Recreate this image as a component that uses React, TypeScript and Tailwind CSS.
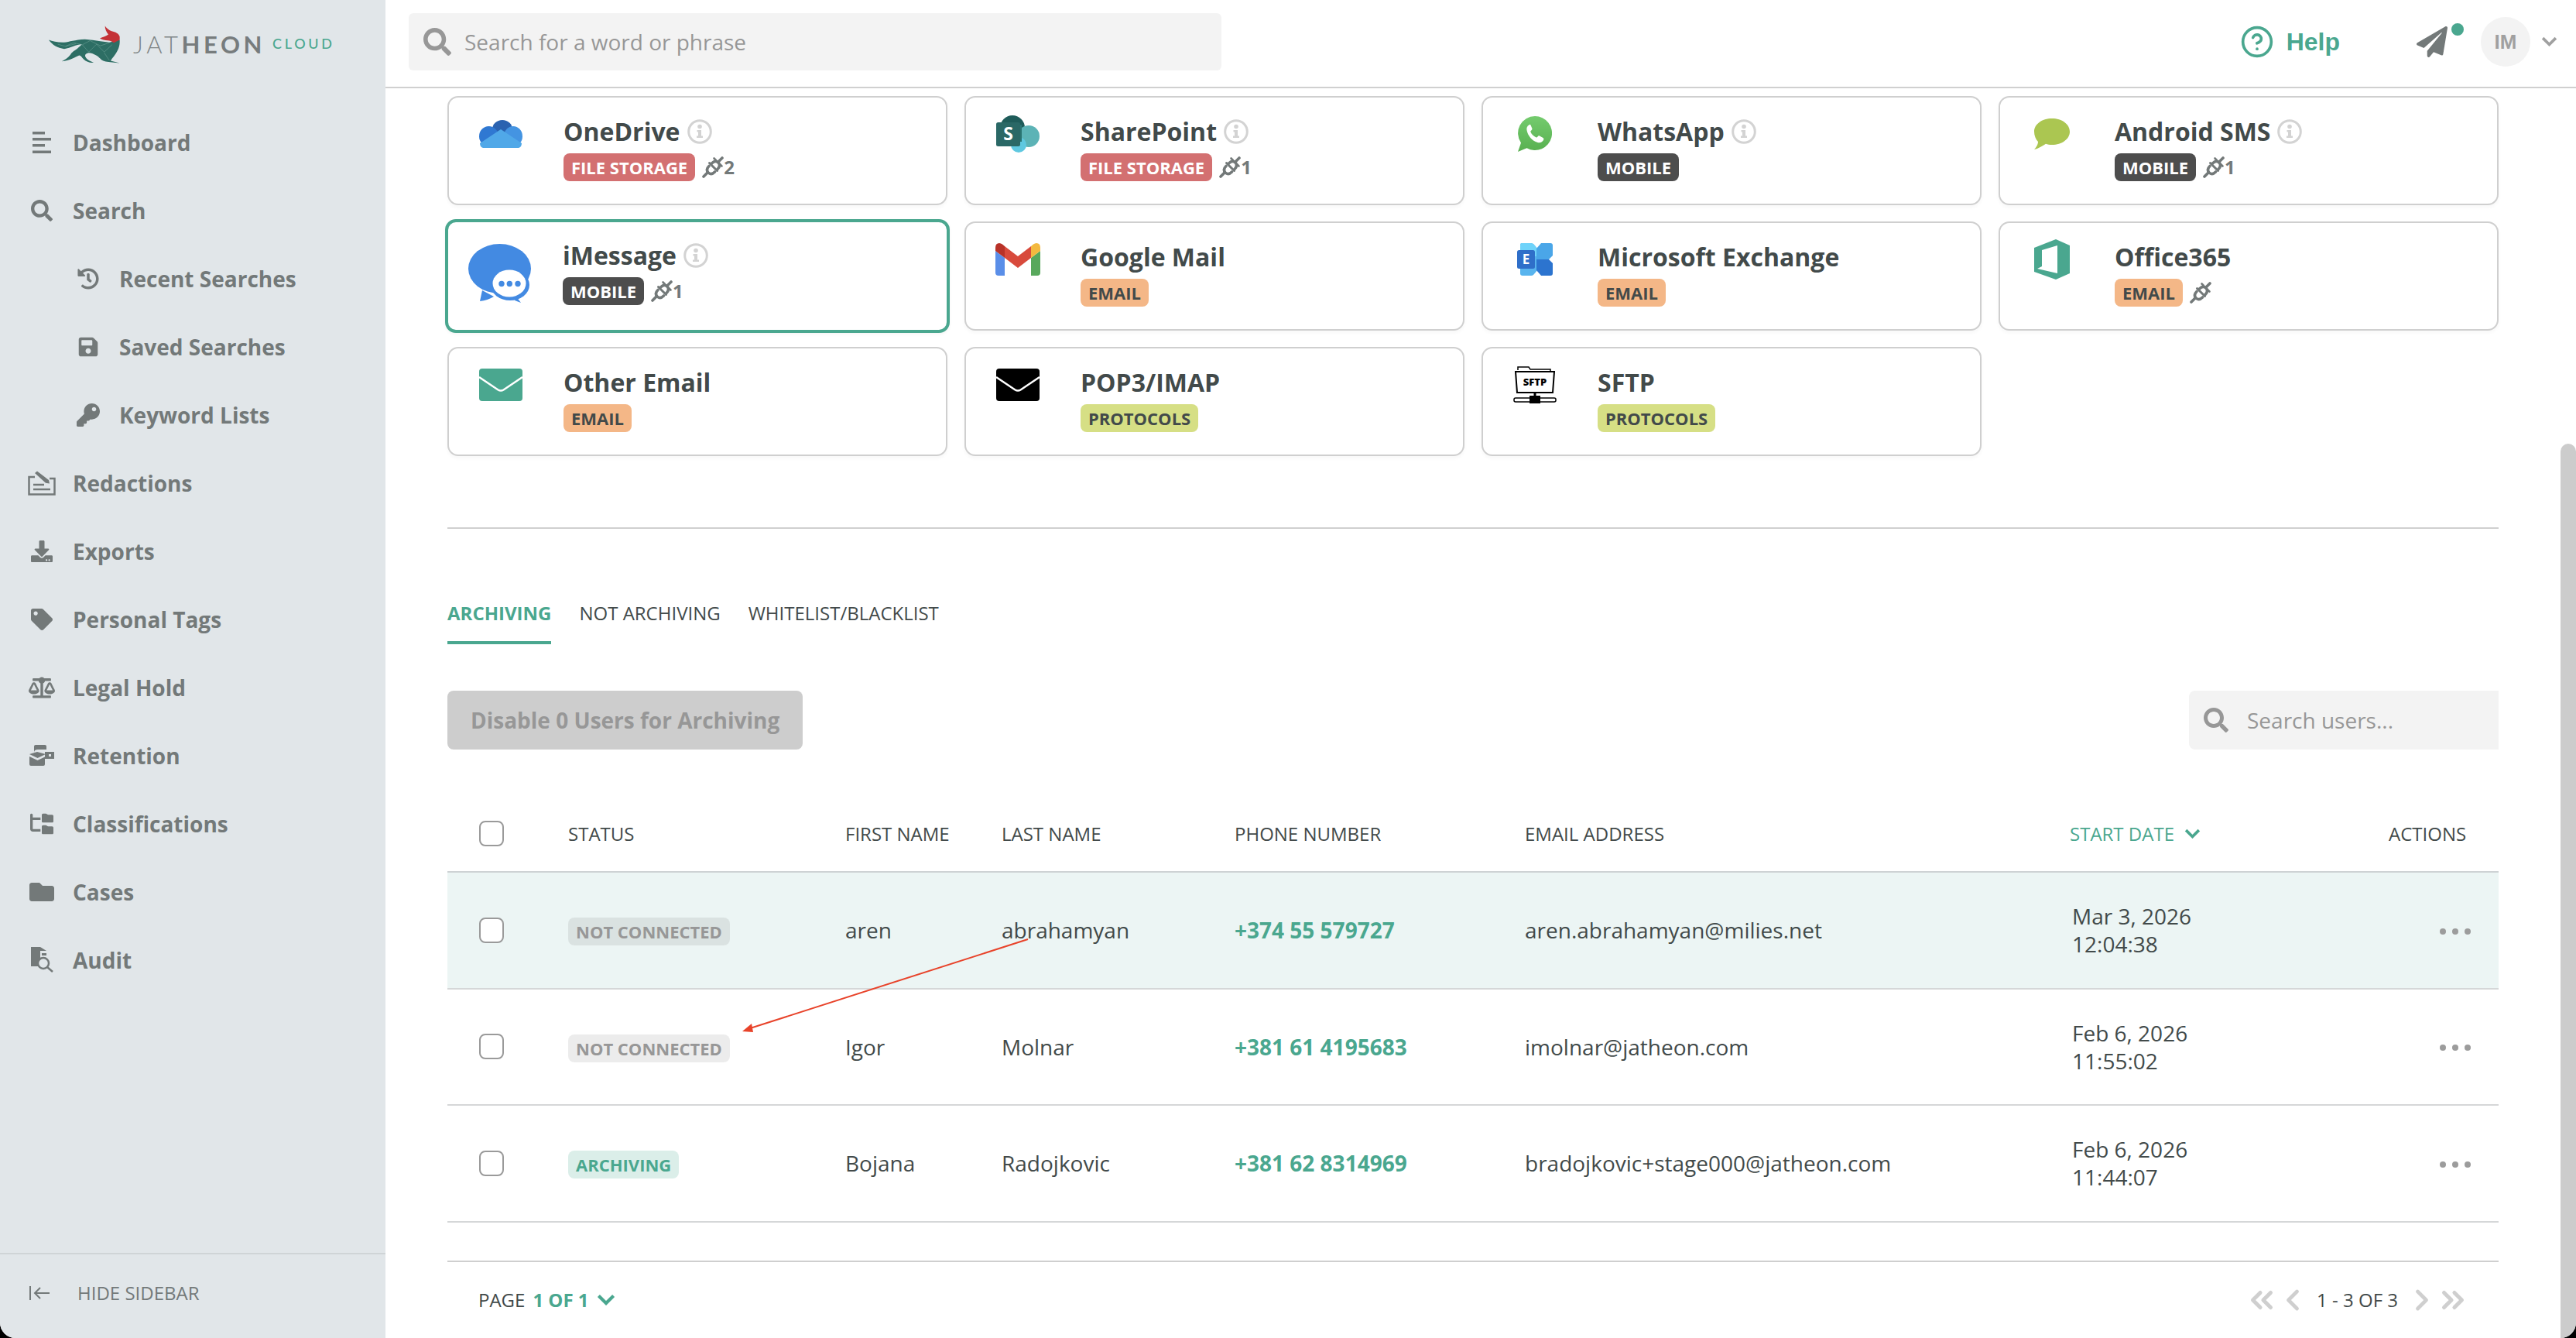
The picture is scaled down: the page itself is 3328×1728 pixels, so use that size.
import React from 'react';
import { ChevronsLeft, ChevronsRight, ChevronLeft, ChevronRight, CircleHelp } from 'lucide-react';
import {
  FaSearch, FaHistory, FaSave, FaKey, FaDownload, FaTag, FaBalanceScale, FaFolder, FaPaperPlane,
} from 'react-icons/fa';
import { FaFolderTree } from 'react-icons/fa6';

const GRID_COLS = 'grid grid-cols-[156px_358px_202px_301px_375px_704px_412px_142px]';

// ─── Sidebar icons ──────────────────────────────────────────────────────────

function DashboardIcon() {
  return (
    <svg viewBox="0 0 24 28" className="h-[28px] w-[24px]" fill="#737979">
      <rect x="0" y="0" width="16" height="3.5" />
      <rect x="0" y="8" width="24" height="3.5" />
      <rect x="0" y="16" width="16" height="3.5" />
      <rect x="0" y="24.5" width="24" height="3.5" />
    </svg>
  );
}

function RedactionIcon() {
  return (
    <svg viewBox="0 0 36 32" className="h-[32px] w-[36px]" fill="none" stroke="#737979" strokeWidth="2.5">
      <path d="M9 8H1.5v22.5h33V10H28" />
      <path d="M7 18h14M7 24h22" />
      <path d="M9 3l3-2.5 15 11.5 1 4.5-5-.8z" fill="#737979" stroke="none" />
    </svg>
  );
}

function RetentionIcon() {
  return (
    <svg viewBox="0 0 32 28" className="h-[28px] w-[32px]" fill="#737979">
      <path d="M6 2q0-2 2-2h12q2 0 2 2v4H11q-5 0-5 4z" />
      <path d="M20 9h12v9H20z" />
      <rect x="25" y="12" width="3" height="3" fill="#e1e6e9" />
      <path d="M0 12l10-3 11 3-10.500 5z" />
      <path d="M0 15l10.500 5 9.500-4.500V25q0 2-2 2H2q-2 0-2-2z" />
    </svg>
  );
}

function AuditIcon() {
  return (
    <svg viewBox="0 0 30 34" className="h-[34px] w-[30px]">
      <path d="M1 0h12v25H1z" fill="#737979" />
      <path d="M13 0l8 5h-8z" fill="#737979" />
      <path d="M15 8h6v3h-6z" fill="#737979" />
      <circle cx="17" cy="21" r="7" fill="#e1e6e9" stroke="#737979" strokeWidth="2.5" />
      <path d="M22 26l7 6" stroke="#737979" strokeWidth="2.5" />
    </svg>
  );
}

// ─── Card icons ─────────────────────────────────────────────────────────────

function OneDriveIcon() {
  return (
    <svg viewBox="0 0 56 36" className="h-[36px] w-[56px] shrink-0">
      <ellipse cx="30" cy="12" rx="13" ry="12" fill="#2a62b0" />
      <ellipse cx="12.500" cy="21" rx="12.500" ry="13" fill="#2f78d2" />
      <ellipse cx="44" cy="21" rx="12" ry="13" fill="#4494e2" />
      <path d="M5 36q-4-1-4-6L28 12l27 18q0 5-4 6z" fill="#50a8e8" />
    </svg>
  );
}

function SharePointIcon() {
  return (
    <svg viewBox="0 0 58 48" className="h-[48px] w-[58px] shrink-0">
      <circle cx="22" cy="16" r="16" fill="#1f5c5a" />
      <circle cx="43" cy="27" r="14" fill="#5cb3b6" />
      <circle cx="30" cy="38" r="10" fill="#5fc8e0" />
      <path d="M20 12h14v22H20z" fill="#2a7472" />
      <rect x="1" y="9" width="31" height="31" rx="2.500" fill="#2a6866" />
      <text x="16.500" y="32" textAnchor="middle" fontSize="23" fontWeight="700" fill="#fff" fontFamily="'Open Sans', sans-serif">S</text>
    </svg>
  );
}

function WhatsAppIcon() {
  return (
    <svg viewBox="0 0 44 46" className="h-[46px] w-[44px] shrink-0">
      <defs>
        <linearGradient id="wa" x1="0" y1="0" x2="0" y2="1">
          <stop offset="0" stopColor="#74cb6e" />
          <stop offset="1" stopColor="#58b050" />
        </linearGradient>
      </defs>
      <path d="M22 0a22 22 0 1 1-10.500 41.300L0 46l4-11.500A22 22 0 0 1 22 0z" fill="url(#wa)" />
      <path d="M15 11c-2 1-4 3-3.500 7 1 7 7 14 14 16 4 1 6-1 7.500-3 .8-1.500.3-2.500-.5-3l-4.500-2.500c-1-.5-1.800 0-2.500 1-.6.8-1.200 1.300-2.200.8-3-1.300-5.500-3.800-6.800-6.800-.4-1 .2-1.600 1-2.300 1-.8 1.200-1.600.7-2.600L16.500 11.500c-.3-.6-1-.8-1.500-.5z" fill="#fff" />
    </svg>
  );
}

function AndroidSmsIcon() {
  return (
    <svg viewBox="0 0 46 40" className="h-[40px] w-[46px] shrink-0">
      <path d="M23 0c13 0 23 7.500 23 17s-10 17-23 17c-3 0-6-.4-8-1.200C11 35 6 39 0 40c2-2 5-6 5-10C2 27 0 22 0 17 0 7.500 10 0 23 0z" fill="#abc651" />
    </svg>
  );
}

function IMessageIcon() {
  return (
    <svg viewBox="0 0 82 76" className="h-[76px] w-[82px] shrink-0 translate-y-[20px]">
      <ellipse cx="40.500" cy="32" rx="40.500" ry="32" fill="#438ae2" />
      <path d="M18 60L15 74q10-1 18-6z" fill="#438ae2" />
      <ellipse cx="54" cy="53" rx="25" ry="20" fill="#438ae2" />
      <path d="M62 68l6 8-8-3z" fill="#438ae2" />
      <ellipse cx="53" cy="51" rx="21.500" ry="17.500" fill="#fff" />
      <circle cx="43" cy="51.500" r="3.700" fill="#438ae2" />
      <circle cx="53.300" cy="51.500" r="3.700" fill="#438ae2" />
      <circle cx="64" cy="51.500" r="3.700" fill="#438ae2" />
    </svg>
  );
}

function GmailIcon() {
  return (
    <svg viewBox="0 0 58 42" className="h-[42px] w-[58px] shrink-0">
      <path d="M0 10l12 9v23H4q-4 0-4-4z" fill="#5a8ee8" />
      <path d="M46 19l12-9v28q0 4-4 4h-8z" fill="#58a85c" />
      <path d="M0 6q0-6 5-6 2 0 4 1.500l3 2.500v15L0 10z" fill="#b83228" />
      <path d="M12 4l17 13L46 4v15L29 32 12 19z" fill="#d84a3c" />
      <path d="M46 4l3-2.500Q51 0 53 0q5 0 5 6v4l-12 9z" fill="#f3b93f" />
    </svg>
  );
}

function ExchangeIcon() {
  return (
    <svg viewBox="0 0 50 44" className="h-[44px] w-[50px] shrink-0">
      <path d="M8 1h12q2 0 3.500 1.500L29 9v26l-5.500 6.500Q22 43 20 43H9q-3 0-3-3V4q0-3 2-3z" fill="#58b4ee" />
      <path d="M8 1h12q2 0 3.500 1.500L29 9v9H6V4q0-3 2-3z" fill="#6fd3fa" />
      <path d="M33 1h12q3 0 3 3v13l-5 5H27V8z" fill="#4aa6e8" />
      <path d="M27 22h16l5 5v13q0 3-3 3H33l-6-7z" fill="#2c74cf" />
      <rect x="2" y="10" width="23" height="24" rx="2.500" fill="#2f6fc9" />
      <text x="13.500" y="28" textAnchor="middle" fontSize="17" fontWeight="700" fill="#fff" fontFamily="'Open Sans', sans-serif">E</text>
    </svg>
  );
}

function OfficeIcon() {
  return (
    <svg viewBox="0 0 46 52" className="h-[52px] w-[46px] shrink-0">
      <path d="M28 0l18 8v36L28 52 0 42V11z" fill="#4aa78f" />
      <path d="M10 14l20-6v36L4 38l6-3z" fill="#fff" />
    </svg>
  );
}

function EnvelopeIcon({ color }: { color: string }) {
  return (
    <svg viewBox="0 0 56 42" className="h-[42px] w-[56px] shrink-0">
      <rect width="56" height="42" rx="4" fill={color} />
      <path d="M0 11l24.500 16.500q3.500 2 7 0L56 11" fill="none" stroke="#fff" strokeWidth="2.500" />
    </svg>
  );
}

function SftpIcon() {
  return (
    <svg viewBox="0 0 56 48" className="h-[48px] w-[56px] shrink-0">
      <path d="M6 5V1h14l2 3h26v3" fill="none" stroke="#000" strokeWidth="1.500" />
      <path d="M3 7h50l-2 27H5z" fill="#fff" stroke="#000" strokeWidth="2" />
      <text x="28" y="25" textAnchor="middle" fontSize="13" fontWeight="800" fill="#000" fontFamily="'Open Sans', sans-serif">SFTP</text>
      <rect x="26.500" y="34" width="3" height="5" fill="#000" />
      <rect x="1" y="41" width="54" height="5" rx="2" fill="#fff" stroke="#000" strokeWidth="1.500" />
      <rect x="21" y="38" width="14" height="10" fill="#000" />
    </svg>
  );
}

function InfoIcon() {
  return (
    <svg viewBox="0 0 32 32" className="h-[32px] w-[32px] shrink-0">
      <circle cx="16" cy="16" r="14.300" fill="none" stroke="#d3d3d3" strokeWidth="3" />
      <circle cx="16" cy="9.500" r="2.800" fill="#d3d3d3" />
      <path d="M12.500 14h5.500v7.500h2v2.500h-8v-2.500h2v-5h-1.500z" fill="#d3d3d3" />
    </svg>
  );
}

function PlugIcon() {
  return (
    <svg viewBox="0 0 28 28" className="h-[28px] w-[28px] shrink-0" fill="none" stroke="#737979" strokeWidth="3.600" strokeLinecap="round">
      <path d="M2 26l5.500-5.500" />
      <path d="M20.500 7.500L26 2" />
      <path d="M9.500 8.500l10 10" strokeWidth="3" />
      <path d="M9 12.500c-3 3-3.200 6-1 8.500 2.400 2.200 5.500 2 8.500-1" />
      <path d="M12.500 9c3-3 6-3.200 8.500-1 2.200 2.400 2 5.500-1 8.500" />
      <path d="M15.500 2.500l2.500 2.500M23 10l2.500 2.500" strokeWidth="2.600" />
    </svg>
  );
}

function Chevron({ color, className }: { color: string; className: string }) {
  return (
    <svg viewBox="0 0 20 13" className={className} fill="none" stroke={color} strokeWidth="3.500">
      <path d="M2 2l8 8 8-8" />
    </svg>
  );
}

// ─── Logo ───────────────────────────────────────────────────────────────────

function FoxMark() {
  return (
    <svg viewBox="190 100 276 146" className="h-[49px] w-[92px] shrink-0">
      <path
        d="M190 155C205 160 225 166 250 165C270 163 290 155 330 153C350 154 370 158 390 160L425 165L465 155C466 175 462 192 445 215C438 224 432 232 430 236L465 245L428 241C412 240 398 238 390 228C382 218 362 206 345 205C335 206 328 212 332 220C338 232 352 238 365 243C350 245 336 240 325 230C318 222 314 216 308 215C296 220 270 236 240 238C258 230 268 222 278 206C288 196 300 192 318 172C296 172 276 186 250 190C224 186 205 176 190 155Z"
        fill="#2d6e64"
      />
      <path d="M225 172l30 8 30-14 35 8 30-16 40 20 35-12M320 174l25 28 30-30 30 30 30-28M405 205l20 30M255 180l40-10" fill="none" stroke="#9cc4ba" strokeWidth="1" />
      <path d="M408 101C416 112 424 118 434 121C448 124 462 130 465 143V155L442 166C434 160 426 157 418 157C408 156 398 155 388 149C400 143 412 142 421 134C413 124 408 114 408 101Z" fill="#c43236" />
    </svg>
  );
}

function Logo() {
  return (
    <div className="flex h-[113px] shrink-0 items-start pl-[63px] pt-[33px]">
      <FoxMark />
      <div className="ml-[17px] mt-[6px] flex items-baseline font-['Lato',sans-serif]">
        <span className="text-[31px] leading-[36px] font-light tracking-[4.600px] text-[#7f8586]">JAT</span>
        <span className="text-[31px] leading-[36px] font-bold tracking-[4.600px] text-[#777c7d]">HEON</span>
        <span className="relative -top-[6px] ml-[9px] text-[18px] leading-[20px] font-medium tracking-[3.700px] text-[#4aa78f]">CLOUD</span>
      </div>
    </div>
  );
}

// ─── Sidebar ────────────────────────────────────────────────────────────────

const ICON_28 = { size: 28, color: '#737979' };

const NAV_ITEMS: { label: string; icon: React.ReactNode; sub?: boolean }[] = [
  { label: 'Dashboard', icon: <DashboardIcon /> },
  { label: 'Search', icon: <FaSearch {...ICON_28} /> },
  { label: 'Recent Searches', icon: <FaHistory {...ICON_28} />, sub: true },
  { label: 'Saved Searches', icon: <FaSave {...ICON_28} />, sub: true },
  { label: 'Keyword Lists', icon: <FaKey {...ICON_28} size={30} />, sub: true },
  { label: 'Redactions', icon: <RedactionIcon /> },
  { label: 'Exports', icon: <FaDownload {...ICON_28} /> },
  { label: 'Personal Tags', icon: <FaTag {...ICON_28} /> },
  { label: 'Legal Hold', icon: <FaBalanceScale size={34} color="#737979" /> },
  { label: 'Retention', icon: <RetentionIcon /> },
  { label: 'Classifications', icon: <FaFolderTree size={30} color="#737979" /> },
  { label: 'Cases', icon: <FaFolder size={32} color="#737979" /> },
  { label: 'Audit', icon: <AuditIcon /> },
];

function Sidebar() {
  return (
    <aside className="flex w-[498px] shrink-0 flex-col bg-[#e1e6e9]">
      <Logo />
      <nav className="mt-[27px] flex flex-1 flex-col">
        {NAV_ITEMS.map((item) => (
          <div key={item.label} className={`flex h-[88px] items-center ${item.sub ? 'pl-[84px]' : 'pl-[24px]'}`}>
            <span className="flex w-[60px] shrink-0 items-center justify-center">{item.icon}</span>
            <span className="ml-[10px] text-[28px] font-bold text-[#737979]">{item.label}</span>
          </div>
        ))}
      </nav>
      <div className="flex h-[110px] shrink-0 items-center border-t-2 border-[#cfd4d6] pb-[8px] pl-[38px]">
        <svg viewBox="0 0 26 18" className="h-[18px] w-[26px]" fill="none" stroke="#737979" strokeWidth="2">
          <path d="M1 0v18M26 9H7M14 2L7 9l7 7" />
        </svg>
        <span className="ml-[36px] text-[24px] text-[#737979]">HIDE SIDEBAR</span>
      </div>
    </aside>
  );
}

// ─── Header ─────────────────────────────────────────────────────────────────

function Header() {
  return (
    <header className="flex h-[114px] shrink-0 items-center border-b-2 border-[#d0d0d0] bg-white pb-[4px] pl-[30px] pr-[24px]">
      <div className="flex h-[74px] w-[1050px] items-center rounded-[6px] bg-[#f3f3f3] pl-[19px]">
        <FaSearch size={36} color="#979797" />
        <span className="ml-[17px] text-[28px] text-[#979797]">Search for a word or phrase</span>
      </div>
      <div className="ml-auto flex items-center">
        <CircleHelp size={44} color="#4aa78f" strokeWidth={2} />
        <span className="ml-[16px] font-['Liberation_Sans',sans-serif] text-[32px] font-bold text-[#4aa78f]">Help</span>
        <span className="relative ml-[99px] mr-[43px] flex">
          <FaPaperPlane size={40} color="#737979" />
          <span className="absolute -right-[21px] -top-[4px] h-[16px] w-[16px] rounded-full bg-[#4aa78f]" />
        </span>
        <span className="flex h-[64px] w-[64px] items-center justify-center rounded-full bg-[#f3f3f3] font-['Liberation_Sans',sans-serif] text-[26px] font-bold text-[#a0a0a0]">IM</span>
        <Chevron color="#a0a0a0" className="ml-[14px] w-[21px]" />
      </div>
    </header>
  );
}

// ─── Connector cards ────────────────────────────────────────────────────────

type Tag = 'FILE STORAGE' | 'MOBILE' | 'EMAIL' | 'PROTOCOLS';

const TAG_STYLES: Record<Tag, string> = {
  'FILE STORAGE': 'bg-[#d37071] text-white',
  MOBILE: 'bg-[#4d4d4d] text-white',
  EMAIL: 'bg-[#f4b787] text-[#424a4a]',
  PROTOCOLS: 'bg-[#d6df85] text-[#424a4a]',
};

const CARDS: { name: string; icon: React.ReactNode; tag: Tag; info?: boolean; plug?: string; selected?: boolean }[] = [
  { name: 'OneDrive', icon: <OneDriveIcon />, tag: 'FILE STORAGE', info: true, plug: '2' },
  { name: 'SharePoint', icon: <SharePointIcon />, tag: 'FILE STORAGE', info: true, plug: '1' },
  { name: 'WhatsApp', icon: <WhatsAppIcon />, tag: 'MOBILE', info: true },
  { name: 'Android SMS', icon: <AndroidSmsIcon />, tag: 'MOBILE', info: true, plug: '1' },
  { name: 'iMessage', icon: <IMessageIcon />, tag: 'MOBILE', info: true, plug: '1', selected: true },
  { name: 'Google Mail', icon: <GmailIcon />, tag: 'EMAIL' },
  { name: 'Microsoft Exchange', icon: <ExchangeIcon />, tag: 'EMAIL' },
  { name: 'Office365', icon: <OfficeIcon />, tag: 'EMAIL', plug: '' },
  { name: 'Other Email', icon: <EnvelopeIcon color="#4aa78f" />, tag: 'EMAIL' },
  { name: 'POP3/IMAP', icon: <EnvelopeIcon color="#000000" />, tag: 'PROTOCOLS' },
  { name: 'SFTP', icon: <SftpIcon />, tag: 'PROTOCOLS' },
];

function ConnectorCard({ card }: { card: (typeof CARDS)[number] }) {
  return (
    <div
      className={`flex rounded-[14px] bg-white pl-[39px] ${
        card.selected
          ? '-mx-[3px] -my-[3px] border-4 border-[#4aa78f] pt-[21px] shadow-[0_2px_4px_rgba(0,0,0,0.04)]'
          : 'border-2 border-[#cfcfcf] pt-[22px] shadow-[0_3px_5px_rgba(0,0,0,0.03)]'
      }`}
    >
      <div className="flex h-[50px] w-[56px] shrink-0 items-center justify-center">{card.icon}</div>
      <div className="ml-[53px]">
        <div className="flex h-[44px] items-center">
          <span className="text-[32px] leading-[44px] font-bold text-[#424a4a]">{card.name}</span>
          {card.info && <span className="ml-[9px] flex"><InfoIcon /></span>}
        </div>
        <div className="mt-[6px] flex h-[36px] items-center">
          <span className={`rounded-[8px] px-[10px] text-[22px] leading-[36px] font-bold ${TAG_STYLES[card.tag]}`}>{card.tag}</span>
          {card.plug !== undefined && (
            <span className="ml-[9px] flex items-center text-[24px] font-bold text-[#737979]">
              <PlugIcon />
              {card.plug}
            </span>
          )}
        </div>
      </div>
    </div>
  );
}

// ─── Users table ────────────────────────────────────────────────────────────

const USERS = [
  { status: 'NOT CONNECTED', first: 'aren', last: 'abrahamyan', phone: '+374 55 579727', email: 'aren.abrahamyan@milies.net', date: 'Mar 3, 2026', time: '12:04:38', active: true },
  { status: 'NOT CONNECTED', first: 'Igor', last: 'Molnar', phone: '+381 61 4195683', email: 'imolnar@jatheon.com', date: 'Feb 6, 2026', time: '11:55:02' },
  { status: 'ARCHIVING', first: 'Bojana', last: 'Radojkovic', phone: '+381 62 8314969', email: 'bradojkovic+stage000@jatheon.com', date: 'Feb 6, 2026', time: '11:44:07' },
];

function Checkbox() {
  return <span className="ml-[41px] block h-[33px] w-[32px] rounded-[8px] border-2 border-[#9a9a9a] bg-white" />;
}

function UsersTable() {
  return (
    <div>
      <div className={`${GRID_COLS} h-[99px] items-center border-b-2 border-[#ced2d4] text-[24px] text-[#424a4a]`}>
        <Checkbox />
        <span>STATUS</span>
        <span>FIRST NAME</span>
        <span>LAST NAME</span>
        <span>PHONE NUMBER</span>
        <span>EMAIL ADDRESS</span>
        <span className="flex items-center text-[#4aa78f]">
          START DATE
          <Chevron color="#4aa78f" className="ml-[13px] w-[21px]" />
        </span>
        <span>ACTIONS</span>
      </div>
      {USERS.map((u) => (
        <div
          key={u.email}
          className={`${GRID_COLS} h-[150.5px] items-center border-b-2 border-[#d5d7d8] text-[28px] text-[#424a4a] ${u.active ? 'bg-[#ecf5f4]' : ''}`}
        >
          <Checkbox />
          <span>
            <span
              className={`inline-block rounded-[8px] px-[10px] text-[22px] leading-[36px] font-bold ${
                u.status === 'ARCHIVING' ? 'bg-[#dbeee9] text-[#4aa78f]' : 'bg-[rgba(0,0,0,0.075)] text-[#979797]'
              }`}
            >
              {u.status}
            </span>
          </span>
          <span>{u.first}</span>
          <span>{u.last}</span>
          <span className="font-bold text-[#4aa78f]">{u.phone}</span>
          <span>{u.email}</span>
          <span className="pl-[3px] leading-[36px]">
            {u.date}
            <br />
            {u.time}
          </span>
          <span className="ml-[66px] mt-[3px] flex gap-[8px]">
            <i className="h-[8px] w-[8px] rounded-full bg-[#9c9c9c]" />
            <i className="h-[8px] w-[8px] rounded-full bg-[#9c9c9c]" />
            <i className="h-[8px] w-[8px] rounded-full bg-[#9c9c9c]" />
          </span>
        </div>
      ))}
    </div>
  );
}

function Pagination() {
  return (
    <div className="mt-[49px] flex h-[100px] items-center border-t-2 border-[#cfcfcf] pl-[40px] pr-[36px] text-[24px] text-[#424a4a]">
      <span>PAGE</span>
      <span className="ml-[10px] font-bold text-[#4aa78f]">1 OF 1</span>
      <Chevron color="#4aa78f" className="ml-[10px] w-[24px]" />
      <div className="ml-auto flex items-center">
        <ChevronsLeft size={46} color="#cfcfcf" strokeWidth={2.6} />
        <ChevronLeft size={44} color="#cfcfcf" strokeWidth={2.6} className="-ml-[5px]" />
        <span className="mx-[9px]">1 - 3 OF 3</span>
        <ChevronRight size={44} color="#cfcfcf" strokeWidth={2.6} />
        <ChevronsRight size={46} color="#cfcfcf" strokeWidth={2.6} className="-ml-[5px]" />
      </div>
    </div>
  );
}

export default function App() {
  return (
    <div className="relative h-[1728px] w-[3328px] overflow-hidden bg-black font-['Open_Sans',sans-serif]">
      <div className="flex h-full overflow-hidden rounded-b-[20px] bg-white">
        <Sidebar />
        <main className="flex min-w-0 flex-1 flex-col">
          <Header />
          <div className="pl-[80px] pr-[100px] pt-[10px]">
            <div className="grid grid-cols-4 auto-rows-[141px] gap-x-[22px] gap-y-[21px]">
              {CARDS.map((card) => (
                <ConnectorCard key={card.name} card={card} />
              ))}
            </div>

            <div className="mt-[92px] h-[2px] bg-[#d0d0d0]" />

            <div className="mt-[89px] flex gap-[36px] text-[24px] leading-[40px] text-[#424a4a]">
              <span className="h-[60px] border-b-4 border-[#4aa78f] font-bold text-[#4aa78f]">ARCHIVING</span>
              <span>NOT ARCHIVING</span>
              <span>WHITELIST/BLACKLIST</span>
            </div>

            <div className="mt-[60px] flex h-[76px] items-stretch justify-between">
              <button className="rounded-[8px] bg-[#cdcdcd] px-[30px] text-[28px] font-bold text-[#979797]">
                Disable 0 Users for Archiving
              </button>
              <div className="flex w-[400px] items-center rounded-l-[8px] bg-[#f3f3f3] pl-[19px]">
                <FaSearch size={32} color="#979797" />
                <span className="ml-[24px] text-[28px] text-[#979797]">Search users...</span>
              </div>
            </div>

            <div className="mt-[60px]">
              <UsersTable />
            </div>

            <Pagination />
          </div>
        </main>
      </div>

      {/* Annotation arrow drawn over the table */}
      <svg className="pointer-events-none absolute left-0 top-0 h-[1728px] w-[3328px]" viewBox="0 0 3328 1728">
        <path d="M1328 1213L966 1329" stroke="#e8432a" strokeWidth="2" />
        <path d="M959 1332l12-10 2 11z" fill="#e8432a" />
      </svg>

      {/* Scrollbar thumb */}
      <div className="absolute bottom-0 right-0 top-[573px] w-[20px] rounded-t-[10px] rounded-br-[20px] bg-[#cccccc]" />
    </div>
  );
}
